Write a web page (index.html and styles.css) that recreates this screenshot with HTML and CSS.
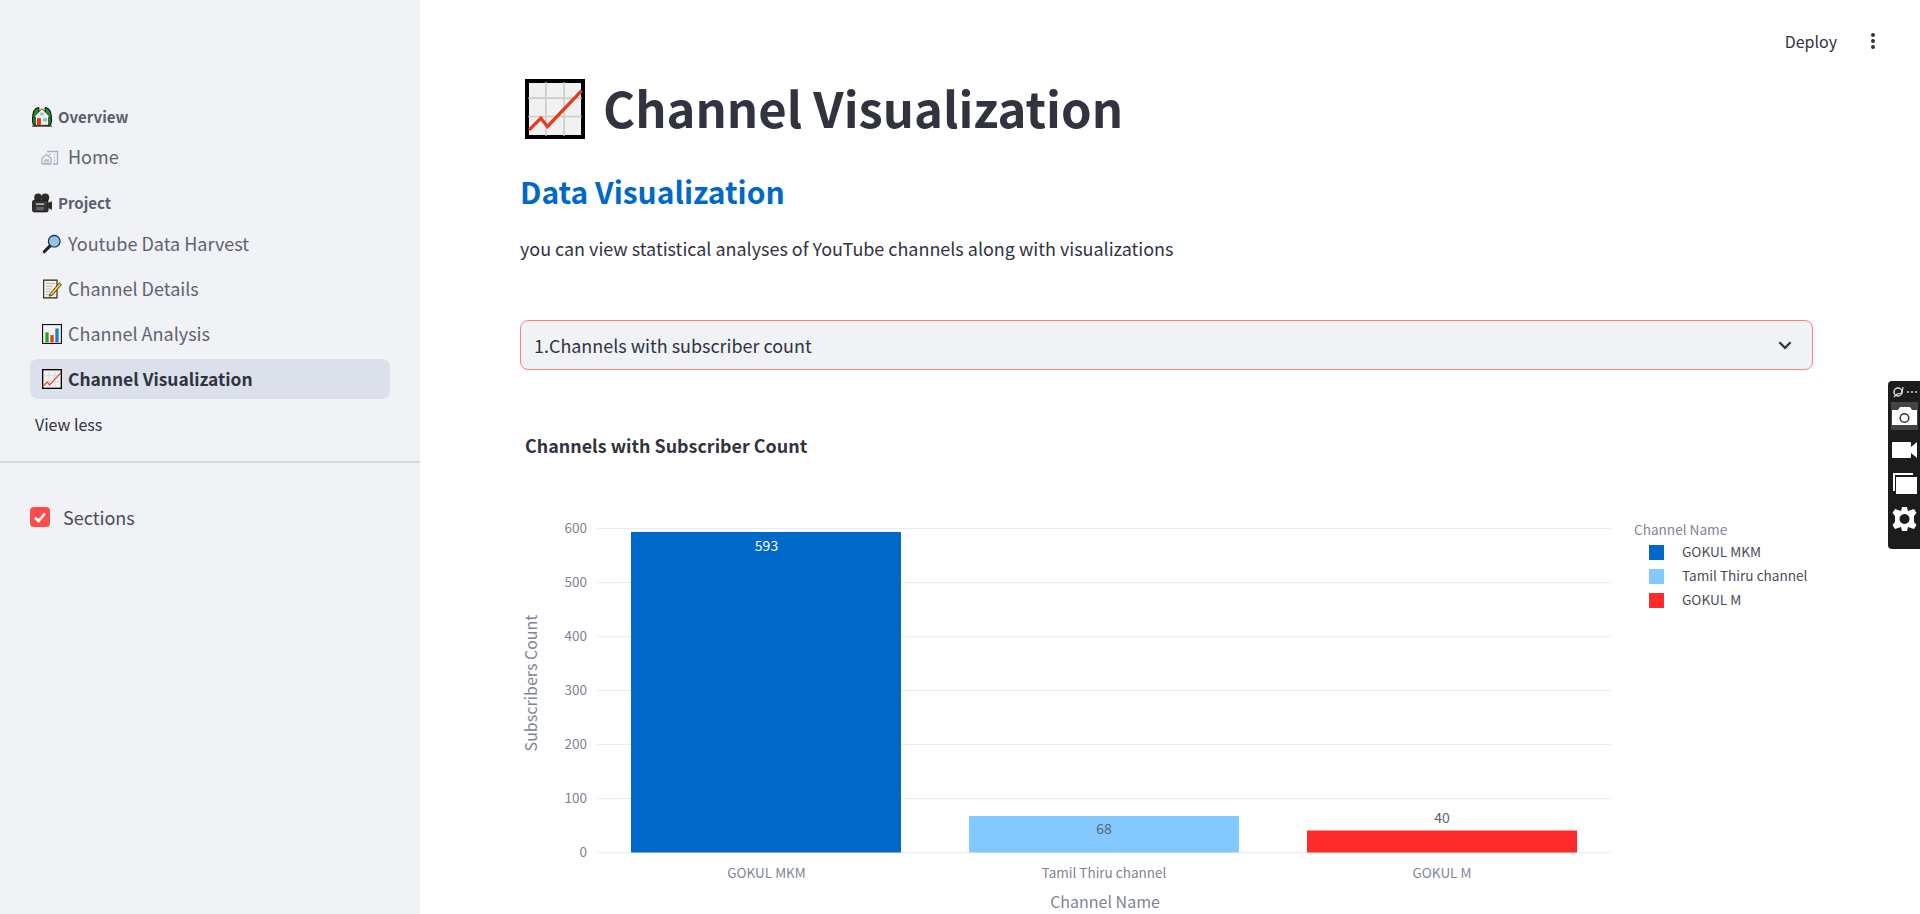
FILE: index.html
```html
<!DOCTYPE html>
<html lang="en">
<head>
<meta charset="utf-8">
<title>Channel Visualization</title>
<link rel="stylesheet" href="styles.css">
</head>
<body>
<svg class="defs" width="0" height="0" aria-hidden="true">
  <symbol id="e-chart" viewBox="0 0 36 36">
    <rect x="1.200" y="1.200" width="33.600" height="33.600" fill="#f1f1f1" stroke="#000" stroke-width="2.400"/>
    <path d="M12.500 2v32M23.500 2v32M2 11.500h32M2 22.500h32" stroke="#ccc" stroke-width="1" fill="none"/>
    <path d="M2.500 30.500l7-7 4 5L34 7" stroke="#e8391c" stroke-width="2" fill="none"/>
  </symbol>
  <symbol id="e-bars" viewBox="0 0 36 36">
    <rect x="1" y="1" width="34" height="34" fill="#f1f1f1" stroke="#111" stroke-width="2"/>
    <rect x="6" y="15" width="6" height="18" fill="#1fa81f"/>
    <rect x="15" y="20" width="6" height="13" fill="#e8391c"/>
    <rect x="24" y="8" width="6" height="25" fill="#1b7fd6"/>
  </symbol>
  <symbol id="e-memo" viewBox="0 0 36 36">
    <path d="M3 2h24v32H3z" fill="#f5f3e6" stroke="#222" stroke-width="2"/>
    <path d="M7 8h16M7 13h12M7 18h9M7 23h7M7 28h12" stroke="#aaa" stroke-width="1.6"/>
    <path d="M15 26l16-19 4 3-16 19-6 2z" fill="#f6c02c" stroke="#222" stroke-width="1.4"/>
  </symbol>
  <symbol id="e-lens" viewBox="0 0 36 36">
    <path d="M4 32l11-11" stroke="#222" stroke-width="5.5" stroke-linecap="round"/>
    <circle cx="22" cy="13" r="10.5" fill="#8cc4ee" stroke="#222" stroke-width="2"/>
  </symbol>
  <symbol id="e-house" viewBox="0 0 36 36">
    <path d="M12 1C5 2 1 10 1 22c0 6 1 10 3 11h10z" fill="#159a25" stroke="#0a0a0a" stroke-width="2"/>
    <path d="M24 1C31 2 35 10 35 22c0 6-1 10-3 11H22z" fill="#159a25" stroke="#0a0a0a" stroke-width="2"/>
    <path d="M18 3L33 18h-3v15H6V18H3z" fill="#f7eee0" stroke="#222" stroke-width="1.500"/>
    <rect x="9" y="20" width="7" height="13" fill="#e0342c"/>
    <rect x="20" y="20" width="7" height="6" fill="#6fc6ee"/>
    <rect x="15" y="10" width="6" height="5" fill="#6fc6ee"/>
    <path d="M0 34.500h36" stroke="#333" stroke-width="2"/>
  </symbol>
  <symbol id="e-camera" viewBox="0 0 36 36">
    <circle cx="11" cy="8" r="7" fill="#2b2b2b"/>
    <circle cx="24" cy="8" r="7" fill="#2b2b2b"/>
    <rect x="1" y="13" width="28" height="21" rx="3" fill="#343434" stroke="#111" stroke-width="1.500"/>
    <path d="M7 20h15" stroke="#b5b5b5" stroke-width="3"/>
    <rect x="8" y="25" width="13" height="6" fill="#666"/>
    <path d="M29 18l7-3v15l-7-3z" fill="#2a2a2a"/>
    <circle cx="25" cy="18" r="1.500" fill="#d8342c"/>
  </symbol>
</svg>

<aside class="sidebar">
  <div class="group-label first"><svg class="group-emoji"><use href="#e-house"/></svg><span>Overview</span></div>
  <a class="nav-item home-item">
    <svg class="home-icon" viewBox="0 0 18 16" fill="none" stroke="#a9b0c6" stroke-width="1.3">
      <path d="M1 15V9l4.500-3.500L10 9v6M4 15v-4h3v4M1 15h9"/>
      <path d="M6 2.500h10.500V15H12M13 5.500h1M13 8.500h1M13 11.500h1M8.500 5.500h1"/>
    </svg>
    <span>Home</span>
  </a>
  <div class="group-label second"><svg class="group-emoji"><use href="#e-camera"/></svg><span>Project</span></div>
  <div class="nav-list">
    <a class="nav-item"><svg class="nav-emoji"><use href="#e-lens"/></svg><span>Youtube Data Harvest</span></a>
    <a class="nav-item"><svg class="nav-emoji"><use href="#e-memo"/></svg><span>Channel Details</span></a>
    <a class="nav-item"><svg class="nav-emoji"><use href="#e-bars"/></svg><span>Channel Analysis</span></a>
    <a class="nav-item active"><svg class="nav-emoji"><use href="#e-chart"/></svg><span>Channel Visualization</span></a>
  </div>
  <div class="view-less">View less</div>
  <hr class="side-rule">
  <label class="check-row">
    <svg class="check-box" viewBox="0 0 20 20"><path d="M5 10.500l3.500 3.500L15 6.500" fill="none" stroke="#fff" stroke-width="2.600"/></svg>
    <span>Sections</span>
  </label>
</aside>

<main class="main">
  <h1 class="page-title"><svg class="title-emoji"><use href="#e-chart"/></svg><span>Channel Visualization</span></h1>
  <h2 class="sub-title">Data Visualization</h2>
  <p class="desc">you can view statistical analyses of YouTube channels along with visualizations</p>
  <div class="select-box">
    <span>1.Channels with subscriber count</span>
    <svg class="chevron" viewBox="0 0 16 16"><path d="M3 5.500l5 5 5-5" fill="none" stroke="#31333f" stroke-width="2"/></svg>
  </div>
  <svg class="chart" viewBox="520 410 1293 504" width="1293" height="504">
    <text class="c-title" x="525" y="453">Channels with Subscriber Count</text>
    <g class="grid">
      <path d="M597 528.500H1611M597 582.500H1611M597 636.500H1611M597 690.500H1611M597 744.500H1611M597 798.500H1611M597 852.500H1611"/>
    </g>
    <rect x="631" y="532" width="270" height="320.500" fill="#0068c9"/>
    <rect x="969" y="816" width="270" height="36.500" fill="#83c9ff"/>
    <rect x="1307" y="830.500" width="270" height="22" fill="#ff2b2b"/>
    <g class="tick" text-anchor="end">
      <text x="587" y="533">600</text>
      <text x="587" y="587">500</text>
      <text x="587" y="641">400</text>
      <text x="587" y="695">300</text>
      <text x="587" y="749">200</text>
      <text x="587" y="803">100</text>
      <text x="587" y="857">0</text>
    </g>
    <g class="tick" text-anchor="middle">
      <text x="766.500" y="878">GOKUL MKM</text>
      <text x="1104" y="878">Tamil Thiru channel</text>
      <text x="1442" y="878">GOKUL M</text>
    </g>
    <g class="bar-label" text-anchor="middle">
      <text class="on-dark" x="766.500" y="551">593</text>
      <text x="1104" y="834">68</text>
      <text x="1442" y="823">40</text>
    </g>
    <text class="axis-title" x="1105" y="908" text-anchor="middle">Channel Name</text>
    <text class="axis-title" transform="translate(537 683) rotate(-90)" text-anchor="middle">Subscribers Count</text>
    <text class="legend-title" x="1634" y="535">Channel Name</text>
    <rect x="1649" y="545" width="15" height="15" fill="#0068c9"/>
    <rect x="1649" y="569" width="15" height="15" fill="#83c9ff"/>
    <rect x="1649" y="593" width="15" height="15" fill="#ff2b2b"/>
    <g class="legend-item">
      <text x="1682" y="557">GOKUL MKM</text>
      <text x="1682" y="581">Tamil Thiru channel</text>
      <text x="1682" y="605">GOKUL M</text>
    </g>
  </svg>
</main>

<div class="top-actions">
  <span class="deploy">Deploy</span>
  <svg class="kebab" viewBox="0 0 6 18"><circle cx="3" cy="3" r="2"/><circle cx="3" cy="9" r="2"/><circle cx="3" cy="15" r="2"/></svg>
</div>

<svg class="capture-bar" viewBox="1888 381 32 168" width="32" height="168">
  <rect x="1888" y="381" width="40" height="168" rx="4" fill="#1c1c1c"/>
  <circle cx="1898" cy="392" r="4" fill="none" stroke="#ddd" stroke-width="1.500"/>
  <path d="M1894 397l3-3 5-1 1-6" fill="none" stroke="#ddd" stroke-width="1.200"/>
  <path d="M1907 392h2M1911 392h2M1915 392h2" stroke="#ddd" stroke-width="1.500"/>
  <rect x="1891" y="402" width="27" height="28" fill="#444"/>
  <path d="M1892 410h6l2-3h10l2 3h5v15h-25z" fill="#fff"/>
  <circle cx="1904.500" cy="418" r="4.300" fill="none" stroke="#333" stroke-width="1.500"/>
  <rect x="1892" y="442" width="19" height="16" rx="1" fill="#fff"/>
  <path d="M1911 447l6-5v16l-6-5z" fill="#fff"/>
  <path d="M1893 491v-18h20v2h-18v16z" fill="#fff"/>
  <rect x="1896" y="477" width="21" height="17" fill="#fff"/>
  <path fill="#fff" fill-rule="evenodd" d="M1902 507h5l1 4 3-1 3-1 2.500 4-2.500 3v6l2.500 3-2.500 4-3-1-3-1-1 4h-5l-1-4-3 1-3 1-2.500-4 2.500-3v-6l-2.500-3 2.500-4 3 1 3 1zM1904.500 514a5 5 0 1 0 .01 0z"/>
</svg>
</body>
</html>
```

FILE: styles.css
```css
* { box-sizing: border-box; }
html { height: 914px; overflow: hidden; }
body {
  display: flex;
  height: 914px;
  margin: 0;
  overflow: hidden;
  background: #fff;
  color: #31333f;
  font-family: "Noto Sans CJK SC", "Liberation Sans", sans-serif;
}
.defs { position: absolute; }

.sidebar {
  flex: 0 0 420px;
  background: #f0f2f6;
  padding-top: 105px;
  display: flex;
  flex-direction: column;
}
.group-label {
  display: flex;
  align-items: center;
  height: 24px;
  margin-left: 32px;
  font-size: 15px;
  font-weight: 600;
  color: #5b5e6c;
}
.group-label span { margin-bottom: 2px; }
.group-label.second { margin-top: 14px; }
.group-emoji { width: 20px; height: 20px; margin-right: 6px; }
.nav-list { display: flex; flex-direction: column; gap: 5px; margin-top: 9px; }
.nav-item {
  display: flex;
  align-items: center;
  height: 40px;
  margin: 0 30px;
  padding-left: 12px;
  border-radius: 8px;
  font-size: 18px;
  color: #5f6371;
}
.nav-item span { margin-bottom: 2px; }
.home-item { margin-top: 8px; padding-left: 11px; }
.home-icon { width: 18px; height: 16px; margin-right: 9px; }
.nav-emoji { width: 20px; height: 20px; margin-right: 6px; }
.nav-item.active { background: #dbe0ea; color: #31333f; font-weight: 600; font-size: 17.4px; }
.view-less {
  height: 24px;
  line-height: 22px;
  margin: 14px 0 0 35px;
  font-size: 16px;
  color: #31333f;
}
.side-rule {
  width: 100%;
  height: 2px;
  margin: 24px 0 0;
  border: 0;
  background: #d6d7dc;
}
.check-row {
  display: flex;
  align-items: center;
  margin: 41px 0 0 30px;
  font-size: 18px;
  color: #4a4c59;
}
.check-box {
  width: 20px;
  height: 20px;
  margin-right: 13px;
  border-radius: 4px;
  background: #ff4b4b;
}

.main {
  flex: 1;
  padding: 69px 107px 0 100px;
  min-width: 0;
}
.page-title {
  display: flex;
  align-items: center;
  height: 80px;
  margin: 0;
  font-size: 49px;
  font-weight: 700;
  line-height: 72px;
  white-space: nowrap;
}
.page-title span { margin-bottom: 5px; }
.title-emoji { width: 60px; height: 60px; margin: 0 18px 0 5px; }
.sub-title {
  height: 50px;
  margin: 18px 0 0;
  font-size: 30px;
  line-height: 48px;
  font-weight: 600;
  color: #0068c9;
}
.desc {
  height: 28px;
  margin: 18px 0 0;
  font-size: 17.95px;
  line-height: 26px;
}
.select-box {
  display: flex;
  align-items: center;
  justify-content: space-between;
  height: 50px;
  margin-top: 57px;
  padding: 0 18px 0 13px;
  background: #f0f2f6;
  border: 1px solid #ff8080;
  border-radius: 8px;
  font-size: 17.95px;
}
.select-box span { margin-bottom: 1px; }
.chevron { width: 18px; height: 18px; }
.chart { display: block; margin-top: 40px; overflow: visible; }
.c-title { font-size: 17.9px; font-weight: 700; fill: #31333f; }
.grid path { stroke: #e6eaf1; stroke-width: 1; fill: none; }
.tick text { font-size: 13.5px; fill: #808495; }
.bar-label text { font-size: 14px; fill: #5d6170; }
.bar-label .on-dark { fill: #fff; }
.axis-title { font-size: 16px; fill: #808495; }
.legend-title { font-size: 13.6px; fill: #808495; }
.legend-item text { font-size: 13.6px; fill: #4a4c59; }

.top-actions {
  position: absolute;
  top: 25px;
  right: 44px;
  display: flex;
  align-items: center;
  gap: 33px;
  height: 32px;
}
.deploy { font-size: 16px; color: #31333f; }
.kebab { width: 6px; height: 18px; fill: #31333f; }
.capture-bar { position: fixed; top: 381px; right: 0; }
```
